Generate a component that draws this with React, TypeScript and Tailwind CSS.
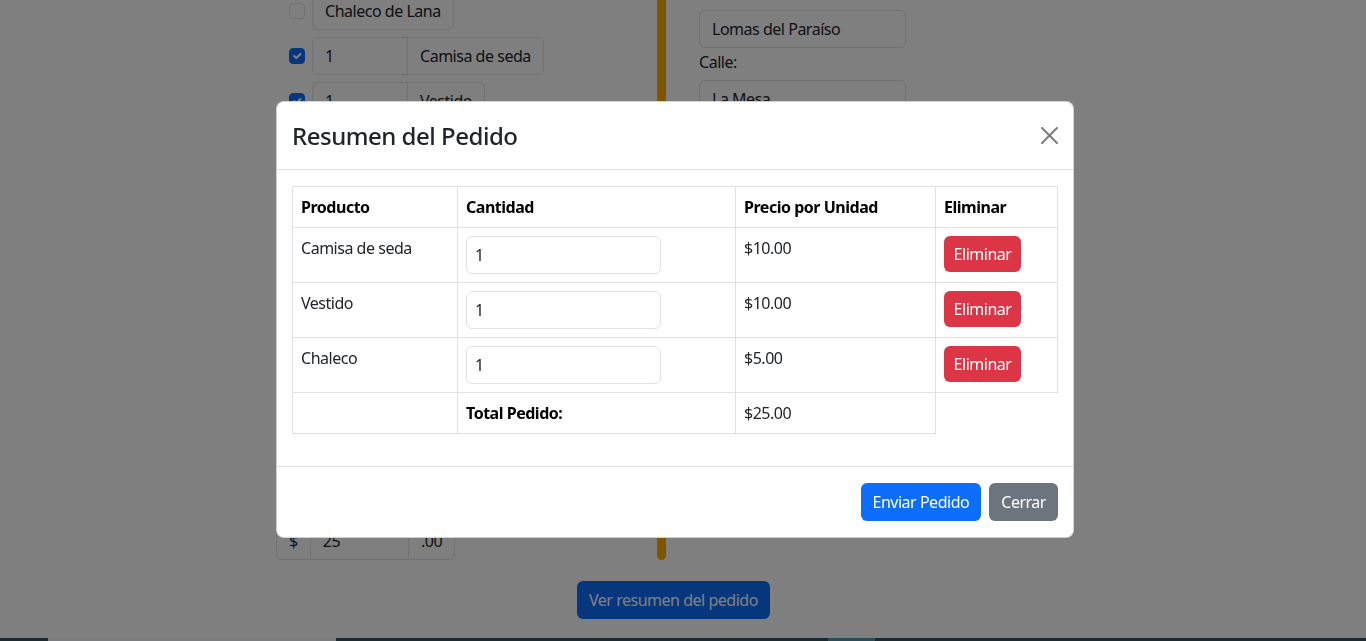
import React from 'react';

const items = [
  { name: 'Camisa de seda', qty: 1, price: 10 },
  { name: 'Vestido', qty: 1, price: 10 },
  { name: 'Chaleco', qty: 1, price: 5 },
];

const font = "font-['Noto_Sans',sans-serif] tracking-[-0.03em]";

function CheckBox({ checked }: { checked?: boolean }) {
  return (
    <span
      className={`flex h-4 w-4 shrink-0 items-center justify-center rounded-[4px] border ${
        checked ? 'border-[#0d6efd] bg-[#0d6efd]' : 'border-[#dee2e6] bg-white'
      }`}
    >
      {checked && (
        <svg viewBox="0 0 20 20" className="h-4 w-4" fill="none">
          <path d="m6 10 3 3 6-6" stroke="#fff" strokeWidth="3" strokeLinecap="round" strokeLinejoin="round" />
        </svg>
      )}
    </span>
  );
}

function CloseIcon() {
  return (
    <svg viewBox="0 0 16 16" className="h-[17px] w-[17px]" fill="currentColor">
      <path d="M.293.293a1 1 0 0 1 1.414 0L8 6.586 14.293.293a1 1 0 1 1 1.414 1.414L9.414 8l6.293 6.293a1 1 0 0 1-1.414 1.414L8 9.414l-6.293 6.293a1 1 0 0 1-1.414-1.414L6.586 8 .293 1.707a1 1 0 0 1 0-1.414z" />
    </svg>
  );
}

function BackgroundPage() {
  return (
    <>
      <div className="-mt-[8px] flex">
        <div className="ml-[276px] flex h-[568px] w-[381px] flex-col gap-[7px]">
          <div className="flex items-center gap-[7px] pl-[13px]">
            <CheckBox />
            <div className="flex h-[38px] items-center rounded-[6px] border border-[#dee2e6] px-3">Chaleco de Lana</div>
          </div>
          <div className="flex items-center gap-[7px] pl-[13px]">
            <CheckBox checked />
            <div className="flex h-[38px]">
              <div className="flex w-[96px] items-center rounded-l-[6px] border border-[#dee2e6] px-3">1</div>
              <div className="-ml-px flex items-center rounded-r-[6px] border border-[#dee2e6] px-3">Camisa de seda</div>
            </div>
          </div>
          <div className="flex items-center gap-[7px] pl-[13px]">
            <CheckBox checked />
            <div className="flex h-[38px]">
              <div className="flex w-[96px] items-center rounded-l-[6px] border border-[#dee2e6] px-3">1</div>
              <div className="-ml-px flex items-center rounded-r-[6px] border border-[#dee2e6] px-3">Vestido</div>
            </div>
          </div>
          <div className="mt-auto flex h-[38px] w-[179px]">
            <div className="flex w-[35px] items-center justify-center rounded-l-[6px] border border-[#dee2e6] text-[#0a2a6a]">$</div>
            <div className="-ml-px flex w-[100px] items-center border border-[#dee2e6] px-3">25</div>
            <div className="-ml-px flex w-[47px] items-center justify-center rounded-r-[6px] border border-[#dee2e6]">.00</div>
          </div>
        </div>
        <div className="h-[568px] w-[9px] rounded-b-full bg-[#ffaa00]" />
        <div className="ml-[33px] flex w-[207px] flex-col pt-[18px]">
          <div className="flex h-[38px] items-center rounded-[6px] border border-[#dee2e6] px-3">Lomas del Paraíso</div>
          <label className="mt-[2px] leading-6">Calle:</label>
          <div className="mt-[6px] flex h-[38px] items-center rounded-[6px] border border-[#dee2e6] px-3">La Mesa</div>
        </div>
      </div>
      <div className="ml-[577px] mt-[21px]">
        <button className="h-[38px] rounded-[6px] bg-[#0d6efd] px-3 text-white">Ver resumen del pedido</button>
      </div>
      <div className="mt-[19px] flex h-[3px]">
        <div className="w-[48px] bg-[#36545c]" />
        <div className="w-[288px] bg-[#f4fcff]" />
        <div className="w-[492px] bg-[#36545c]" />
        <div className="w-[47px] bg-[#589aae]" />
        <div className="flex-1 bg-[#36545c]" />
      </div>
    </>
  );
}

function OrderModal() {
  const total = items.reduce((s, it) => s + it.qty * it.price, 0);
  const cell = 'border border-[#dee2e6] px-2 py-2 align-top leading-6';

  return (
    <div className="fixed inset-0">
      <div className="ml-[276px] mt-[101px] w-[798px] rounded-[8px] border border-black/[.175] bg-white">
        <div className="flex h-[68px] items-center justify-between border-b border-[#dee2e6] pl-[15px] pr-[15px]">
          <h4 className="text-[24px] font-medium leading-[36px] text-[#212529]">Resumen del Pedido</h4>
          <button className="text-black opacity-50">
            <CloseIcon />
          </button>
        </div>

        <div className="px-[15px] py-4">
          <table className="mb-4 w-[766px] border-collapse text-left text-[#212529]">
            <thead>
              <tr>
                <th className={`${cell} w-[165px] font-bold text-black`}>Producto</th>
                <th className={`${cell} w-[278px] font-bold text-black`}>Cantidad</th>
                <th className={`${cell} w-[200px] font-bold text-black`}>Precio por Unidad</th>
                <th className={`${cell} font-bold text-black`}>Eliminar</th>
              </tr>
            </thead>
            <tbody>
              {items.map((it) => (
                <tr key={it.name}>
                  <td className={cell}>{it.name}</td>
                  <td className={cell}>
                    <div className="flex h-[38px] w-[195px] items-center rounded-[6px] border border-[#dee2e6] pl-[8px]">
                      {it.qty}
                    </div>
                  </td>
                  <td className={cell}>${it.price.toFixed(2)}</td>
                  <td className={cell}>
                    <button className="h-[36px] w-[77px] rounded-[6px] bg-[#dc3545] text-white">Eliminar</button>
                  </td>
                </tr>
              ))}
              <tr>
                <td className={cell}></td>
                <td className={`${cell} font-bold text-black`}>Total Pedido:</td>
                <td className={cell}>${total.toFixed(2)}</td>
              </tr>
            </tbody>
          </table>
        </div>

        <div className="flex justify-end gap-2 border-t border-[#dee2e6] px-[15px] py-4">
          <button className="h-[38px] rounded-[6px] bg-[#0d6efd] px-3 text-white">Enviar Pedido</button>
          <button className="h-[38px] rounded-[6px] bg-[#6c757d] px-3 text-white">Cerrar</button>
        </div>
      </div>
    </div>
  );
}

export default function App() {
  return (
    <div className={`relative h-[641px] overflow-hidden bg-white text-[16px] text-[#212529] ${font}`}>
      <BackgroundPage />
      <div className="fixed inset-0 bg-black/50" />
      <OrderModal />
    </div>
  );
}
